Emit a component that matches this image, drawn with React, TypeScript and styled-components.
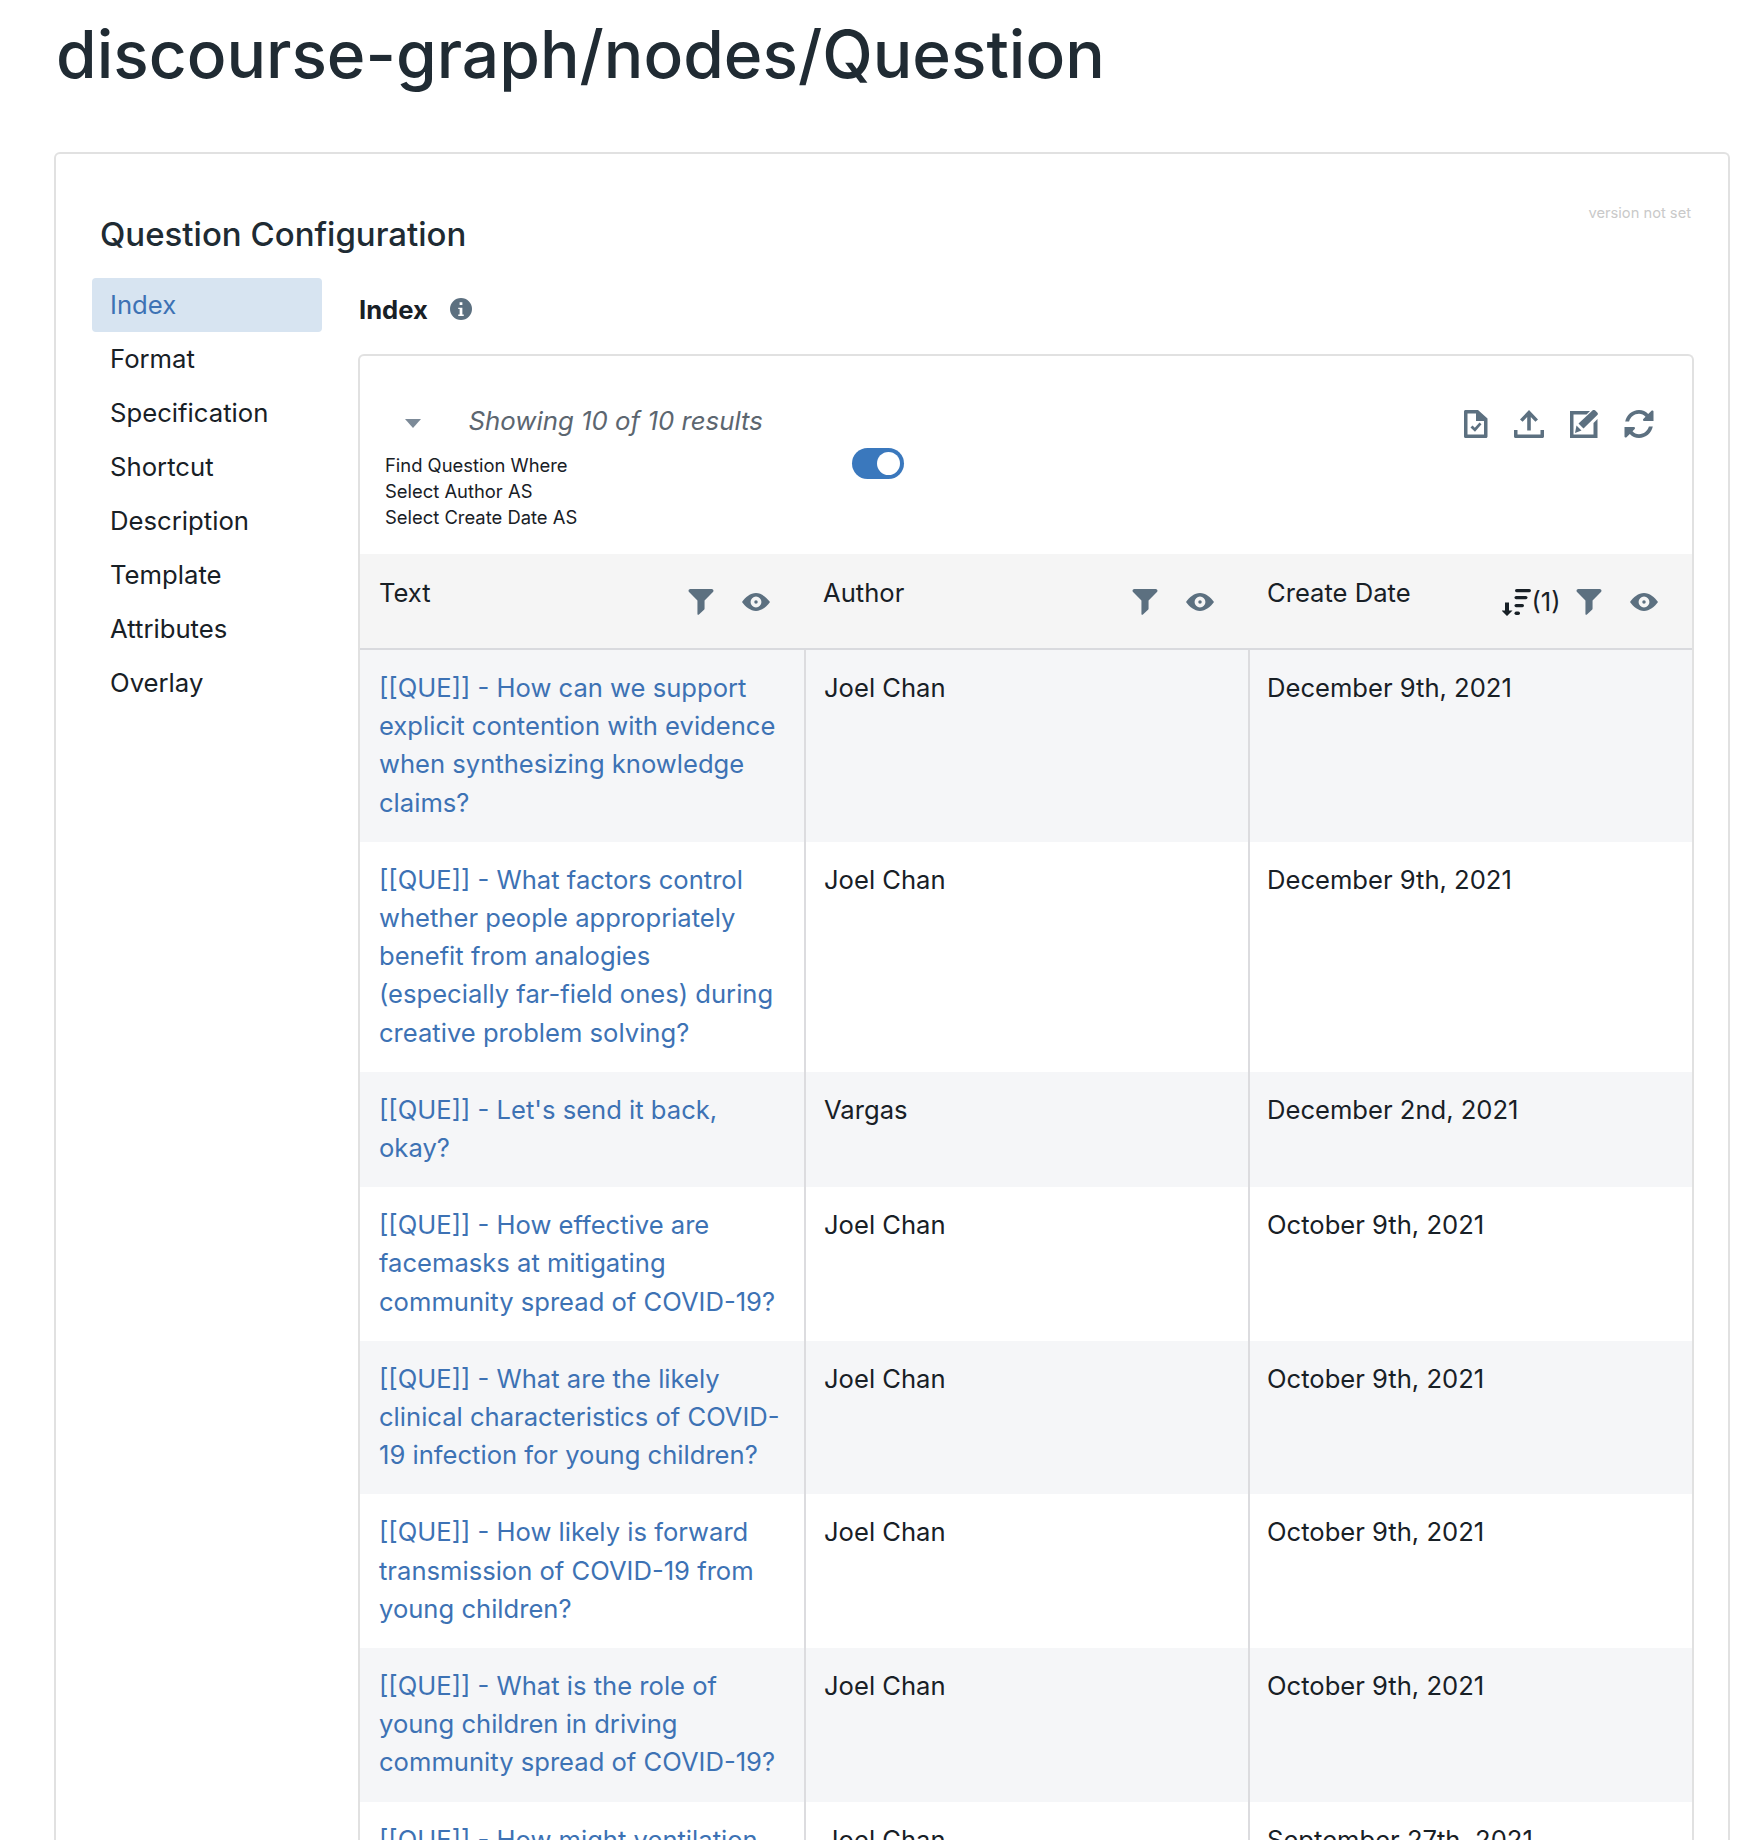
import React from "react";
import styled, { createGlobalStyle } from "styled-components";

const GlobalStyle = createGlobalStyle`
  html, body {
    margin: 0;
    height: 1840px;
    overflow: hidden;
    background: #fff;
    font-family: Inter, "Noto Sans", sans-serif;
  }
`;

const tabs = ["Index", "Format", "Specification", "Shortcut", "Description", "Template", "Attributes", "Overlay"];

const rows = [
  ["[[QUE]] - How can we support explicit contention with evidence when synthesizing knowledge claims?", "Joel Chan", "December 9th, 2021"],
  ["[[QUE]] - What factors control whether people appropriately benefit from analogies (especially far-field ones) during creative problem solving?", "Joel Chan", "December 9th, 2021"],
  ["[[QUE]] - Let's send it back, okay?", "Vargas", "December 2nd, 2021"],
  ["[[QUE]] - How effective are facemasks at mitigating community spread of COVID-19?", "Joel Chan", "October 9th, 2021"],
  ["[[QUE]] - What are the likely clinical characteristics of COVID-19 infection for young children?", "Joel Chan", "October 9th, 2021"],
  ["[[QUE]] - How likely is forward transmission of COVID-19 from young children?", "Joel Chan", "October 9th, 2021"],
  ["[[QUE]] - What is the role of young children in driving community spread of COVID-19?", "Joel Chan", "October 9th, 2021"],
  ["[[QUE]] - How might ventilation", "Joel Chan", "September 27th, 2021"],
];

const Icon = styled.svg<{ $w: number; $h: number }>`
  width: ${(p) => p.$w}px;
  height: ${(p) => p.$h}px;
  fill: #5c7080;
  flex: none;
  display: block;
`;

const FilterIcon = () => (
  <Icon $w={26} $h={26} viewBox="1 1 14 14.600">
    <path d="M14 1H2c-.55 0-1 .45-1 1 0 .28.11.53.29.71L6 7.41V15c0 .28.22.5.5.5.14 0 .26-.06.35-.15l2.860-2.640c.18-.18.29-.43.29-.71V7.41l4.710-4.700c.18-.18.29-.43.29-.71 0-.55-.45-1-1-1z" />
  </Icon>
);

const EyeIcon = () => (
  <Icon $w={28} $h={28} viewBox="0 0 16 16">
    <path
      fillRule="evenodd"
      d="M8 2.900c-3.200 0-6 2.400-8 5.100 2 2.700 4.800 5.100 8 5.100s6-2.400 8-5.100c-2-2.700-4.800-5.100-8-5.100zM8 4.900a3.100 3.100 0 1 1 0 6.200 3.100 3.100 0 0 1 0-6.200zM8 7a1 1 0 1 0 0 2 1 1 0 0 0 0-2z"
    />
  </Icon>
);

const InfoIcon = () => (
  <Icon $w={22} $h={22} viewBox="0 0 16 16">
    <path
      fillRule="evenodd"
      d="M8 0a8 8 0 1 0 0 16A8 8 0 0 0 8 0zM7 3h2v2H7V3zm3 10H6v-1h1V8H6V7h3v5h1v1z"
    />
  </Icon>
);

const FileIcon = () => (
  <Icon $w={24} $h={28} viewBox="0 0 24 28">
    <path
      fillRule="evenodd"
      d="M1.500 0H14l9.500 8.500V26.500c0 .8-.7 1.500-1.500 1.500h-20.500C.7 28 0 27.300 0 26.500v-25C0 .7.700 0 1.500 0zM3.500 3.500v21h16.500V11h-8V3.500H3.500z"
    />
    <path d="M6.500 17.500l2-2 2.300 2.300 4.700-5.300 2 1.700-6.500 7.500z" />
  </Icon>
);

const UploadIcon = () => (
  <Icon $w={30} $h={28} viewBox="0 0 30 28">
    <path d="M15 0l9 9.500-2.600 2.300-4.600-4.900V20.500h-3.600V6.900l-4.600 4.900L6 9.500z" />
    <path d="M0 20h3.500v4.500h23V20H30v6.500c0 .8-.7 1.500-1.500 1.500h-27C.7 28 0 27.300 0 26.500z" />
  </Icon>
);

const EditIcon = () => (
  <Icon $w={28} $h={28} viewBox="0 0 28 28">
    <path d="M0 1h20l-3.500 3.500H3.500v20h20V13L27.500 9v19H0z" />
    <path d="M23 0c.6-.3 1.300-.2 2 .3l2.300 2.200c.7.700.8 1.600.3 2.300L13.500 18.500l-5-5zM6.500 15.500l5 5L5 23z" />
  </Icon>
);

const RefreshIcon = () => (
  <Icon $w={30} $h={28} viewBox="0 0 30 28">
    <path d="M15 0c3.700 0 6.900 1.500 9.200 4L27.500.700c.6-.500 2-.200 2 .8v9.500H20c-1 0-1.300-1.400-.700-2l2.200-2.200C19.900 4.900 17.600 3.800 15 3.800c-4.700 0-8.700 3.300-9.900 7.700H1.200C2.500 5 8.100 0 15 0z" />
    <path d="M15 28c-3.700 0-6.900-1.500-9.200-4l-3.300 3.300c-.6.500-2 .2-2-.8V17h9.500c1 0 1.300 1.400.7 2l-2.200 2.200c1.600 1.900 3.900 3 6.500 3 4.700 0 8.700-3.300 9.900-7.700h3.900C27.500 23 21.900 28 15 28z" />
  </Icon>
);

const SortSvg = styled.svg`
  width: 29px;
  height: 27px;
  fill: #182026;
  display: block;
  flex: none;
`;

const SortIcon = () => (
  <SortSvg viewBox="0 0 29 27">
    <path d="M3 13.500h4v8h3.500L5 27 -.5 21.500H3z" />
    <rect x="13" y="0" width="16" height="3.200" rx="1.600" />
    <rect x="12.500" y="7" width="13" height="3.200" rx="1.600" />
    <rect x="12.500" y="15" width="9.500" height="3.200" rx="1.600" />
    <rect x="12.500" y="22.500" width="5.500" height="3.400" rx="1.700" />
  </SortSvg>
);

const Page = styled.div`
  width: 1738px;
  height: 1840px;
  overflow: hidden;
`;

const Title = styled.h1`
  margin: 0;
  padding: 10px 0 0 56px;
  height: 152px;
  box-sizing: border-box;
  font-size: 65.800px;
  line-height: 88px;
  font-weight: 500;
  color: #202b33;
`;

const Card = styled.section`
  position: relative;
  margin-left: 54px;
  width: 1676px;
  box-sizing: border-box;
  border: 2px solid #e1e1e1;
  border-bottom: none;
  border-radius: 6px 6px 0 0;
  padding: 61px 34px 0 36px;
`;

const Version = styled.span`
  position: absolute;
  top: 50px;
  right: 37px;
  font-size: 14.700px;
  line-height: 18px;
  color: #c9c9c9;
`;

const CardTitle = styled.h2`
  margin: 0 0 25px 8px;
  font-size: 33px;
  line-height: 38px;
  font-weight: 500;
  color: #202b33;
`;

const Columns = styled.div`
  display: flex;
  gap: 36px;
`;

const TabList = styled.nav`
  width: 230px;
  flex: none;
  display: flex;
  flex-direction: column;
`;

const Tab = styled.div<{ $active?: boolean }>`
  height: 54px;
  box-sizing: border-box;
  display: flex;
  align-items: center;
  padding: 0 0 2px 18px;
  font-size: 25.700px;
  border-radius: 4px;
  color: ${(p) => (p.$active ? "#3d72b4" : "#182026")};
  background: ${(p) => (p.$active ? "#d7e4f1" : "transparent")};
`;

const Panel = styled.div`
  flex: 1;
  min-width: 0;
`;

const PanelHead = styled.div`
  display: flex;
  align-items: center;
  gap: 22px;
  height: 44px;
  padding: 9px 0 1px 1px;
  margin-bottom: 22px;
  font-size: 25.600px;
  font-weight: 700;
  color: #182026;
`;

const ResultsBox = styled.div`
  border: 2px solid #e1e1e1;
  border-bottom: none;
  border-radius: 6px 6px 0 0;
`;

const Toolbar = styled.div`
  display: flex;
  justify-content: space-between;
  height: 198px;
  box-sizing: border-box;
  padding: 45px 38px 0 25px;
`;

const Summary = styled.div`
  display: flex;
  flex-direction: column;
`;

const SummaryTop = styled.div`
  display: flex;
  align-items: center;
  height: 38px;
  padding-left: 20px;
`;

const Caret = styled.span`
  width: 0;
  height: 0;
  border-left: 8px solid transparent;
  border-right: 8px solid transparent;
  border-top: 9px solid #7c8a98;
  margin: 7px 47.500px 0 0;
`;

const Showing = styled.em`
  font-size: 25.800px;
  color: #5c6670;
`;

const ConditionRow = styled.div`
  display: flex;
  align-items: flex-start;
`;

const Conditions = styled.div`
  width: 467px;
  margin-top: 13px;
  font-size: 18.400px;
  line-height: 26px;
  color: #182026;
`;

const Toggle = styled.span`
  position: relative;
  display: block;
  width: 52px;
  height: 31px;
  margin-top: 9px;
  border-radius: 16px;
  background: #3a78bd;
  &::after {
    content: "";
    position: absolute;
    top: 4px;
    right: 4px;
    width: 23px;
    height: 23px;
    border-radius: 50%;
    background: #fff;
  }
`;

const Actions = styled.div`
  display: flex;
  gap: 26px;
  align-items: flex-start;
  padding-top: 9px;
`;

const Table = styled.table`
  width: 100%;
  table-layout: fixed;
  border-collapse: collapse;
  font-size: 25.600px;
  line-height: 38.200px;
  color: #182026;
`;

const TextCol = styled.col`
  width: 445px;
`;

const AuthorCol = styled.col`
  width: 444px;
`;

const HeadCell = styled.th`
  height: 94px;
  padding: 0;
  background: #f5f5f5;
  border-bottom: 2px solid #d9dade;
  font-weight: 400;
  text-align: left;
  vertical-align: top;
  & + & > div {
    padding-left: 18px;
  }
  &:last-child > div {
    padding-right: 34.500px;
  }
`;

const HeadInner = styled.div`
  display: flex;
  justify-content: space-between;
  padding: 20px 35.500px 0 19px;
`;

const HeadTools = styled.div`
  display: flex;
  align-items: center;
  gap: 28px;
  padding-top: 14px;
  height: 28px;
`;

const SortTag = styled.span`
  display: flex;
  align-items: center;
  margin-right: -13px;
  line-height: 28px;
`;

const Row = styled.tr<{ $odd: boolean }>`
  background: ${(p) => (p.$odd ? "#f5f6f8" : "#fff")};
`;

const Cell = styled.td`
  padding: 19px 19px 20px;
  vertical-align: top;
  & + & {
    border-left: 2px solid #dcdcdf;
    padding-left: 18px;
  }
  &:last-child {
    padding-left: 17px;
  }
`;

const QuestionLink = styled.span`
  color: #3d72b4;
`;

export default function App() {
  return (
    <Page>
      <GlobalStyle />
      <Title>discourse-graph/nodes/Question</Title>
      <Card>
        <Version>version not set</Version>
        <CardTitle>Question Configuration</CardTitle>
        <Columns>
          <TabList>
            {tabs.map((t, i) => (
              <Tab key={t} $active={i === 0}>
                {t}
              </Tab>
            ))}
          </TabList>
          <Panel>
            <PanelHead>
              Index
              <InfoIcon />
            </PanelHead>
            <ResultsBox>
              <Toolbar>
                <Summary>
                  <SummaryTop>
                    <Caret />
                    <Showing>Showing 10 of 10 results</Showing>
                  </SummaryTop>
                  <ConditionRow>
                    <Conditions>
                      Find Question Where
                      <br />
                      Select Author AS
                      <br />
                      Select Create Date AS
                    </Conditions>
                    <Toggle />
                  </ConditionRow>
                </Summary>
                <Actions>
                  <FileIcon />
                  <UploadIcon />
                  <EditIcon />
                  <RefreshIcon />
                </Actions>
              </Toolbar>
              <Table>
                <colgroup>
                  <TextCol />
                  <AuthorCol />
                  <col />
                </colgroup>
                <thead>
                  <tr>
                    <HeadCell>
                      <HeadInner>
                        Text
                        <HeadTools>
                          <FilterIcon />
                          <EyeIcon />
                        </HeadTools>
                      </HeadInner>
                    </HeadCell>
                    <HeadCell>
                      <HeadInner>
                        Author
                        <HeadTools>
                          <FilterIcon />
                          <EyeIcon />
                        </HeadTools>
                      </HeadInner>
                    </HeadCell>
                    <HeadCell>
                      <HeadInner>
                        Create Date
                        <HeadTools>
                          <SortTag>
                            <SortIcon />
                            (1)
                          </SortTag>
                          <FilterIcon />
                          <EyeIcon />
                        </HeadTools>
                      </HeadInner>
                    </HeadCell>
                  </tr>
                </thead>
                <tbody>
                  {rows.map((r, i) => (
                    <Row key={r[0]} $odd={i % 2 === 0}>
                      <Cell>
                        <QuestionLink>{r[0]}</QuestionLink>
                      </Cell>
                      <Cell>{r[1]}</Cell>
                      <Cell>{r[2]}</Cell>
                    </Row>
                  ))}
                </tbody>
              </Table>
            </ResultsBox>
          </Panel>
        </Columns>
      </Card>
    </Page>
  );
}
